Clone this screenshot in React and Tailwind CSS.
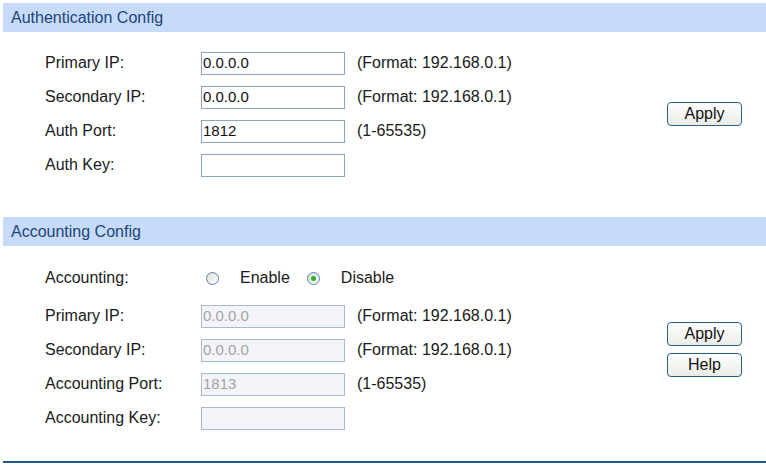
import React from 'react'

const font = { fontFamily: '"Liberation Sans", Arial, sans-serif' }

function Header({ title }) {
  return (
    <div className="ml-[3px] h-[29px] bg-[#c6dbfa] flex items-center pl-[8px] text-[16px] text-[#1d4578]">
      {title}
    </div>
  )
}

function Field({ label, value = '', hint, disabled }) {
  return (
    <div className="h-[34px] flex items-center">
      <div className="w-[201px] pl-[45px] text-[16px] text-[#1a1a1a] whitespace-nowrap">{label}</div>
      <div
        className={`w-[144px] h-[23px] border flex items-center pl-[1px] text-[15px] ${
          disabled ? 'bg-[#f3f4f9] border-[#a9bad0] text-[#a3a3a3]' : 'bg-white border-[#8aa4c2] text-[#111]'
        }`}
      >
        {value}
      </div>
      {hint && <div className="ml-[12px] text-[16px] text-[#1a1a1a] whitespace-nowrap">{hint}</div>}
    </div>
  )
}

function Btn({ children }) {
  return (
    <button className="w-[75px] h-[24px] rounded-[4px] border border-[#2c5d8f] bg-gradient-to-b from-white to-[#ebebe6] text-[16px] text-[#111] flex items-center justify-center">
      {children}
    </button>
  )
}

function Radio({ checked }) {
  return (
    <span className="w-[13px] h-[13px] rounded-full border border-[#5f7fa6] bg-gradient-to-br from-[#dcdcdc] to-white flex items-center justify-center">
      {checked && <span className="w-[5px] h-[5px] rounded-full bg-[#29b52b]" />}
    </span>
  )
}

export default function App() {
  return (
    <div className="w-[766px] h-[467px] bg-white pt-[3px] overflow-hidden" style={font}>
      <Header title="Authentication Config" />
      <div className="flex items-center pt-[14px]">
        <div className="flex flex-col">
          <Field label="Primary IP:" value="0.0.0.0" hint="(Format: 192.168.0.1)" />
          <Field label="Secondary IP:" value="0.0.0.0" hint="(Format: 192.168.0.1)" />
          <Field label="Auth Port:" value="1812" hint="(1-65535)" />
          <Field label="Auth Key:" />
        </div>
        <div className="ml-auto mr-[24px] flex flex-col gap-[7px]">
          <Btn>Apply</Btn>
        </div>
      </div>

      <div className="mt-[35px]">
        <Header title="Accounting Config" />
      </div>
      <div className="flex items-center pt-[15px]">
        <div className="flex flex-col">
          <div className="h-[34px] mb-[4px] flex items-center">
            <div className="w-[201px] pl-[45px] text-[16px] text-[#1a1a1a]">Accounting:</div>
            <div className="ml-[5px] flex items-center text-[16px] text-[#1a1a1a]">
              <Radio />
              <span className="ml-[21px]">Enable</span>
              <span className="ml-[17px]"><Radio checked /></span>
              <span className="ml-[21px]">Disable</span>
            </div>
          </div>
          <Field label="Primary IP:" value="0.0.0.0" hint="(Format: 192.168.0.1)" disabled />
          <Field label="Secondary IP:" value="0.0.0.0" hint="(Format: 192.168.0.1)" disabled />
          <Field label="Accounting Port:" value="1813" hint="(1-65535)" disabled />
          <Field label="Accounting Key:" disabled />
        </div>
        <div className="ml-auto mr-[24px] mt-[2px] flex flex-col gap-[7px]">
          <Btn>Apply</Btn>
          <Btn>Help</Btn>
        </div>
      </div>

      <div className="mt-[26px] ml-[3px] h-[2px] bg-[#1f5a8d]" />
    </div>
  )
}
